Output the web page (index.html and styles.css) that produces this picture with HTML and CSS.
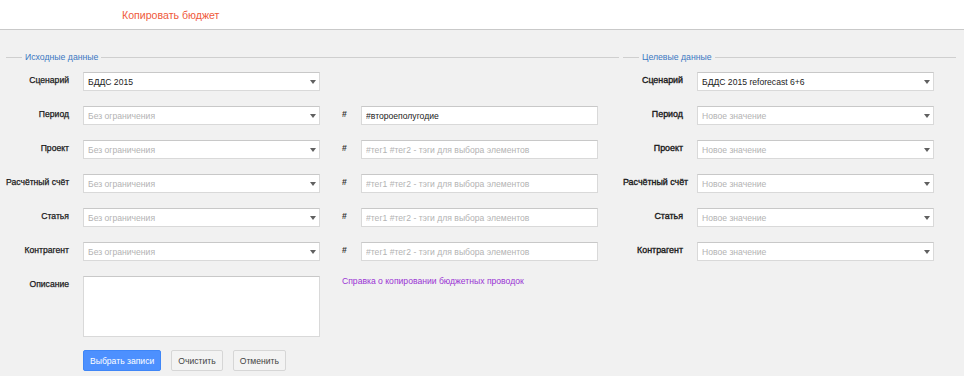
FILE: index.html
```html
<!DOCTYPE html>
<html lang="ru">
<head>
  <meta charset="UTF-8">
  <meta name="viewport" content="width=device-width, initial-scale=1.0">
  <title>Копировать бюджет</title>
  <link rel="stylesheet" href="styles.css">
</head>
<body>
  <header class="topbar">
    <span class="page-title">Копировать бюджет</span>
  </header>

  <main class="content">
    <fieldset class="group group-source">
      <legend>Исходные данные</legend>
      <div class="form-grid source-grid">
        <label class="field-label">Сценарий</label>
        <div class="combo"><span class="combo-value">БДДС 2015</span><span class="combo-arrow"></span></div>

        <label class="field-label">Период</label>
        <div class="combo"><span class="combo-value placeholder">Без ограничения</span><span class="combo-arrow"></span></div>
        <span class="hash">#</span>
        <input type="text" class="tag-input" value="#второеполугодие" placeholder="#тег1 #тег2 - тэги для выбора элементов">

        <label class="field-label">Проект</label>
        <div class="combo"><span class="combo-value placeholder">Без ограничения</span><span class="combo-arrow"></span></div>
        <span class="hash">#</span>
        <input type="text" class="tag-input" placeholder="#тег1 #тег2 - тэги для выбора элементов">

        <label class="field-label">Расчётный счёт</label>
        <div class="combo"><span class="combo-value placeholder">Без ограничения</span><span class="combo-arrow"></span></div>
        <span class="hash">#</span>
        <input type="text" class="tag-input" placeholder="#тег1 #тег2 - тэги для выбора элементов">

        <label class="field-label">Статья</label>
        <div class="combo"><span class="combo-value placeholder">Без ограничения</span><span class="combo-arrow"></span></div>
        <span class="hash">#</span>
        <input type="text" class="tag-input" placeholder="#тег1 #тег2 - тэги для выбора элементов">

        <label class="field-label">Контрагент</label>
        <div class="combo"><span class="combo-value placeholder">Без ограничения</span><span class="combo-arrow"></span></div>
        <span class="hash">#</span>
        <input type="text" class="tag-input" placeholder="#тег1 #тег2 - тэги для выбора элементов">

        <label class="field-label">Описание</label>
        <textarea class="note-input"></textarea>
        <a class="help-link" href="#">Справка о копировании бюджетных проводок</a>

        <div class="actions">
          <button class="btn btn-primary">Выбрать записи</button>
          <button class="btn">Очистить</button>
          <button class="btn">Отменить</button>
        </div>
      </div>
    </fieldset>

    <fieldset class="group group-target">
      <legend>Целевые данные</legend>
      <div class="form-grid target-grid">
        <label class="field-label">Сценарий</label>
        <div class="combo"><span class="combo-value">БДДС 2015 reforecast 6+6</span><span class="combo-arrow"></span></div>

        <label class="field-label">Период</label>
        <div class="combo"><span class="combo-value placeholder">Новое значение</span><span class="combo-arrow"></span></div>

        <label class="field-label">Проект</label>
        <div class="combo"><span class="combo-value placeholder">Новое значение</span><span class="combo-arrow"></span></div>

        <label class="field-label">Расчётный счёт</label>
        <div class="combo"><span class="combo-value placeholder">Новое значение</span><span class="combo-arrow"></span></div>

        <label class="field-label">Статья</label>
        <div class="combo"><span class="combo-value placeholder">Новое значение</span><span class="combo-arrow"></span></div>

        <label class="field-label">Контрагент</label>
        <div class="combo"><span class="combo-value placeholder">Новое значение</span><span class="combo-arrow"></span></div>
      </div>
    </fieldset>
  </main>
</body>
</html>
```

FILE: styles.css
```css
body {
  margin: 0;
  font-family: "Liberation Sans", Arial, sans-serif;
  font-size: 8.6px;
  color: #222;
  background-color: #f1f1f1;
  height: 376px;
  overflow: hidden;
}
.topbar {
  box-sizing: border-box;
  height: 30px;
  background-color: #fff;
  border-bottom: 1px solid #c9c9c9;
  display: flex;
  align-items: center;
  padding-left: 122px;
}
.page-title {
  font-size: 10.6px;
  color: #ef5a3c;
}
.content {
  display: flex;
  gap: 4px;
  padding: 21px 8px 0 6px;
}
.group {
  margin: 0;
  padding: 9px 0 0;
  border: none;
  border-top: 1px solid #cfcfcf;
  min-width: 0;
}
.group-source {
  width: 613px;
}
.group-target {
  flex: 1;
}
.group legend {
  margin-left: 16px;
  padding: 0 3px;
  font-size: 8.7px;
  line-height: 12px;
  color: #3b78c2;
}
.form-grid {
  display: grid;
  row-gap: 15px;
  align-items: start;
}
.source-grid {
  grid-template-columns: 77px 237px 41px 237px;
}
.target-grid {
  grid-template-columns: 74px 237px;
}
.field-label {
  grid-column: 1;
  text-align: right;
  padding: 2px 14px 0 0;
  font-size: 8.6px;
  line-height: 12px;
  color: #1a1a1a;
  -webkit-text-stroke: 0.25px #1a1a1a;
  white-space: nowrap;
}
.target-grid .field-label {
  font-size: 8.9px;
  -webkit-text-stroke: 0.35px #1a1a1a;
}
.combo {
  box-sizing: border-box;
  height: 19px;
  display: flex;
  align-items: center;
  padding: 0 3px 0 4px;
  background-color: #fff;
  border: 1px solid #d9d9d9;
  border-top-color: #c8c8c8;
}
.combo-value {
  flex: 1;
  white-space: nowrap;
  overflow: hidden;
}
.placeholder {
  color: #b3b3b3;
}
.combo-arrow {
  width: 0;
  height: 0;
  border-left: 3px solid transparent;
  border-right: 3px solid transparent;
  border-top: 4px solid #606060;
}
.hash {
  grid-column: 3;
  padding: 2px 0 0 22px;
  font-weight: bold;
  line-height: 12px;
  color: #333;
}
.tag-input,
.note-input {
  box-sizing: border-box;
  margin: 0;
  font-family: inherit;
  font-size: 8.6px;
  color: #222;
  background-color: #fff;
  border: 1px solid #d9d9d9;
  border-top-color: #c8c8c8;
  border-radius: 0;
  outline: none;
}
.tag-input {
  grid-column: 4;
  height: 19px;
  padding: 0 4px;
}
.tag-input::placeholder {
  color: #b3b3b3;
}
.note-input {
  grid-column: 2;
  height: 61px;
  resize: none;
  padding: 3px 4px;
}
.help-link {
  grid-column: 3 / span 2;
  padding-left: 22px;
  line-height: 10px;
  color: #9a34d4;
  text-decoration: none;
}
.actions {
  grid-column: 2 / span 3;
  margin-top: -2px;
  display: flex;
  gap: 10px;
}
.btn {
  height: 21px;
  padding: 0 6px;
  font-family: inherit;
  font-size: 8.6px;
  color: #444;
  background-color: #f3f3f3;
  border: 1px solid #d6d6d6;
  border-radius: 2px;
  cursor: pointer;
}
.btn-primary {
  color: #fff;
  background-color: #4d90fe;
  border-color: #3f86f7;
}
```
